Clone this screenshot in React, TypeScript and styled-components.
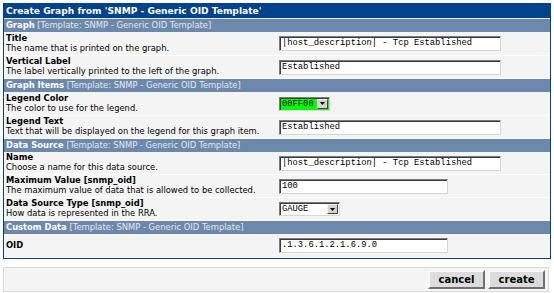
import { FC } from 'react';
import styled, { createGlobalStyle } from 'styled-components';

const GlobalStyle = createGlobalStyle`
  body {
    margin: 0;
    padding: 3px;
    background: #ffffff;
    font-family: "DejaVu Sans", Verdana, sans-serif;
  }
`

const Panel = styled.div`
  width: 546px;
  border: 1px solid #00438c;
  background: #f4f4f4;
`

const TitleBar = styled.div`
  background: #00438c;
  color: #ffffff;
  font-weight: bold;
  font-size: 9.1px;
  height: 14px;
  line-height: 14px;
  padding-left: 2px;
  border-bottom: 1px solid #e6eaf2;
`

const SectionHead = styled.div`
  background: #6d88ad;
  color: #ffffff;
  font-size: 8.4px;
  height: 13px;
  line-height: 13px;
  padding-left: 2px;
  white-space: nowrap;
  b { font-weight: bold; }
  span { color: #e4e8f0; }
`

const Row = styled.div<{ $h?: number }>`
  display: grid;
  grid-template-columns: 273px 1fr;
  align-items: center;
  height: ${(p) => p.$h || 22}px;
  padding: 0 2px;
  border-bottom: 1px solid #ffffff;
`

const LabelCell = styled.div`
  font-size: 8.4px;
  line-height: 9.6px;
  color: #000000;
  white-space: nowrap;
`

const LabelName = styled.div`
  font-weight: bold;
`

const TextBox = styled.div<{ $w: number }>`
  width: ${(p) => p.$w}px;
  height: 15px;
  box-sizing: border-box;
  background: #ffffff;
  border: 1px solid;
  border-color: #7b7b7b #d8d6d0 #d8d6d0 #7b7b7b;
  box-shadow: inset 1px 1px 0 #3c3c3c;
  font-family: "Liberation Mono", "Courier New", monospace;
  font-size: 8.8px;
  line-height: 13px;
  padding-left: 2px;
  white-space: nowrap;
  overflow: hidden;
`

const SelectBox = styled.div<{ $w: number; $bg?: string }>`
  display: flex;
  width: ${(p) => p.$w}px;
  height: 14px;
  box-sizing: border-box;
  border: 1px solid;
  border-color: #7b7b7b #d8d6d0 #d8d6d0 #7b7b7b;
  box-shadow: inset 1px 1px 0 #3c3c3c;
  background: ${(p) => p.$bg || '#ffffff'};
  font-family: "Liberation Mono", "Courier New", monospace;
  font-size: 8.8px;
  line-height: 12px;
`

const SelectValue = styled.span`
  flex: 1;
  padding-left: 2px;
`

const ArrowButton = styled.span`
  display: flex;
  align-items: center;
  justify-content: center;
  width: 11px;
  margin: 1px 1px 1px 0;
  background: #d6d3ce;
  border: 1px solid;
  border-color: #f4f4f4 #404040 #404040 #f4f4f4;
  box-sizing: border-box;
`

const ButtonBar = styled.div`
  display: flex;
  justify-content: flex-end;
  gap: 3px;
  width: 546px;
  margin-top: 8px;
  padding: 2px 3px;
  box-sizing: border-box;
  border: 1px solid #d8d8d8;
  background: #f4f4f4;
`

const Button = styled.button`
  width: 57px;
  height: 19px;
  padding: 0;
  font-family: "DejaVu Sans", Verdana, sans-serif;
  font-weight: bold;
  font-size: 10px;
  color: #000000;
  background: #dcdcdc;
  border: 2px solid;
  border-color: #f8f8f8 #707070 #707070 #f8f8f8;
`

type Field = {
  name: string;
  desc?: string;
  kind: 'text' | 'select';
  value: string;
  width: number;
  bg?: string;
  h?: number;
}

type Section = {
  title: string;
  fields: Field[];
}

const sections: Section[] = [
  {
    title: 'Graph',
    fields: [
      { name: 'Title', desc: 'The name that is printed on the graph.', kind: 'text', value: '|host_description| - Tcp Established', width: 222, h: 23 },
      { name: 'Vertical Label', desc: 'The label vertically printed to the left of the graph.', kind: 'text', value: 'Established', width: 222 },
    ],
  },
  {
    title: 'Graph Items',
    fields: [
      { name: 'Legend Color', desc: 'The color to use for the legend.', kind: 'select', value: '00FF00', width: 51, bg: '#00ff00', h: 23 },
      { name: 'Legend Text', desc: 'Text that will be displayed on the legend for this graph item.', kind: 'text', value: 'Established', width: 222 },
    ],
  },
  {
    title: 'Data Source',
    fields: [
      { name: 'Name', desc: 'Choose a name for this data source.', kind: 'text', value: '|host_description| - Tcp Established', width: 222 },
      { name: 'Maximum Value [snmp_oid]', desc: 'The maximum value of data that is allowed to be collected.', kind: 'text', value: '100', width: 169 },
      { name: 'Data Source Type [snmp_oid]', desc: 'How data is represented in the RRA.', kind: 'select', value: 'GAUGE', width: 61 },
    ],
  },
  {
    title: 'Custom Data',
    fields: [
      { name: 'OID', kind: 'text', value: '.1.3.6.1.2.1.6.9.0', width: 169, h: 23 },
    ],
  },
]

const Arrow: FC = () => (
  <svg width="5" height="3" viewBox="0 0 5 3">
    <path d="M0 0h5L2.5 3z" fill="#000000" />
  </svg>
)

const FieldRow: FC<{ field: Field }> = ({ field }) => (
  <Row $h={field.h}>
    <LabelCell>
      <LabelName>{field.name}</LabelName>
      {field.desc && <div>{field.desc}</div>}
    </LabelCell>
    {field.kind === 'text' ? (
      <TextBox $w={field.width}>{field.value}</TextBox>
    ) : (
      <SelectBox $w={field.width} $bg={field.bg}>
        <SelectValue>{field.value}</SelectValue>
        <ArrowButton><Arrow /></ArrowButton>
      </SelectBox>
    )}
  </Row>
)

export default function App() {
  return (
    <>
      <GlobalStyle />
      <Panel>
        <TitleBar>Create Graph from 'SNMP - Generic OID Template'</TitleBar>
        {sections.map((s) => (
          <div key={s.title}>
            <SectionHead>
              <b>{s.title}</b> <span>[Template: SNMP - Generic OID Template]</span>
            </SectionHead>
            {s.fields.map((f) => (
              <FieldRow key={f.name} field={f} />
            ))}
          </div>
        ))}
      </Panel>
      <ButtonBar>
        <Button>cancel</Button>
        <Button>create</Button>
      </ButtonBar>
    </>
  )
}
